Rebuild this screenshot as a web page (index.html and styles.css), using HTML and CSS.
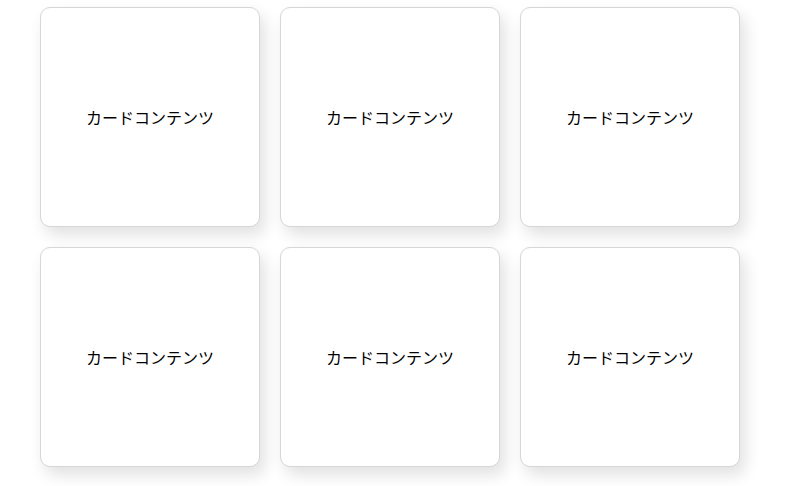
FILE: index.html
```html
<!DOCTYPE html>
<html lang="ja">
<head>
    <meta charset="UTF-8">
    <meta name="viewport" content="width=device-width, initial-scale=1.0">
    <title>カードグリッド</title>
    <link rel="stylesheet" href="styles.css">
</head>
<body>

    <div class="card-grid">
        <div class="card">カードコンテンツ</div>
        <div class="card">カードコンテンツ</div>
        <div class="card">カードコンテンツ</div>
        <div class="card">カードコンテンツ</div>
        <div class="card">カードコンテンツ</div>
        <div class="card">カードコンテンツ</div>
    </div>

</body>
</html>
```

FILE: styles.css
```css
body {
    margin: 0;
    padding: 7px 0 20px 40px;
    background-color: #fff;
    font-family: "Noto Sans CJK JP", sans-serif;
    color: #000;
}

.card-grid {
    display: grid;
    grid-template-columns: repeat(3, 220px);
    gap: 20px;
}

.card {
    box-sizing: border-box;
    width: 220px;
    height: 220px;
    display: flex;
    align-items: center;
    justify-content: center;
    background-color: #fff;
    border: 1px solid #d6d6d6;
    border-radius: 10px;
    box-shadow: 5px 8px 16px rgba(0, 0, 0, 0.12);
    font-size: 16px;
}
```
